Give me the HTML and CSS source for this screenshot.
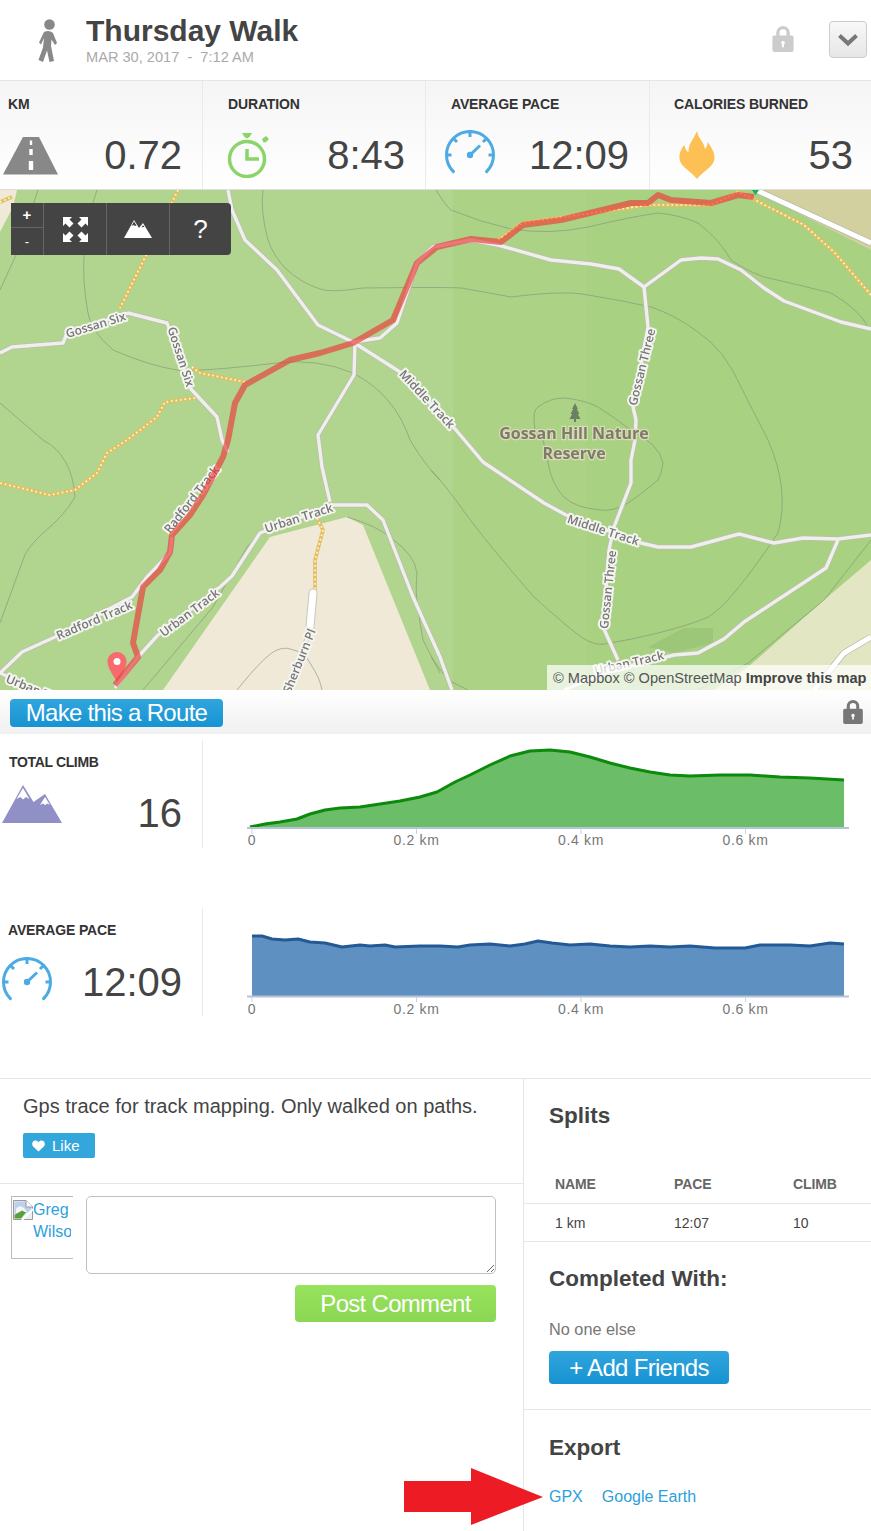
FILE: index.html
```html
<!DOCTYPE html>
<html lang="en">
<head>
<meta charset="utf-8">
<title>Thursday Walk</title>
<link rel="stylesheet" href="styles.css">
</head>
<body>
<svg class="defs" width="0" height="0" aria-hidden="true">
  <symbol id="i-gauge" viewBox="0 0 50 44">
    <path class="gauge-line" d="M8.400 41.600A23.500 23.500 0 1 1 41.600 41.600"/>
    <path class="gauge-tick" d="M25 2V7M8.500 8.500L12 12M41.500 8.500L38 12M1.500 25H6.500M43.500 25H48.500M25 25L35 15.500"/>
    <circle class="gauge-dot" cx="25" cy="25" r="3.200"/>
  </symbol>
  <symbol id="i-lock" viewBox="0 0 22 28">
    <path d="M4 12V8a7 7 0 0 1 14 0v4h-3.400V8a3.600 3.600 0 0 0-7.200 0v4z"/>
    <path fill-rule="evenodd" d="M2 11h18a2 2 0 0 1 2 2v13a2 2 0 0 1-2 2H2a2 2 0 0 1-2-2V13a2 2 0 0 1 2-2zM11 16.500a2 2 0 0 0-1 3.700V23h2v-2.800a2 2 0 0 0-1-3.700z"/>
  </symbol>
</svg>
<div class="page">
  <header class="head">
    <svg class="walker" viewBox="36 18 24 46"><circle cx="49.500" cy="24.500" r="5.300"/><path d="M44 32Q49 29.500 53 33L57 43 55 45 51.500 39.500 51 46 54 61 49.500 62 47 50.500 43 62 38.500 60 43 47.500 44 38 41 44.500 39 42.500Z"/></svg>
    <div class="head-text">
      <h1 class="title">Thursday Walk</h1>
      <div class="date">MAR 30, 2017 &nbsp;-&nbsp; 7:12 AM</div>
    </div>
    <svg class="lock lock-top"><use href="#i-lock"/></svg>
    <button class="chev-btn" type="button" aria-label="More"><svg viewBox="0 0 22 14" class="chev"><path d="M2.500 2.500L11 10.500 19.500 2.500"/></svg></button>
  </header>

  <section class="stats">
    <div class="stat stat-km">
      <div class="stat-label">KM</div>
      <div class="stat-body">
        <svg class="ico-road" viewBox="0 0 55 38"><path class="road-shape" d="M20 0H36L55 37.500H0Z"/><path class="road-dash" d="M26.800 3.500H29.200V8H26.800ZM26.300 12H29.700V18H26.300ZM25.800 24H30.200V33H25.800Z"/></svg>
        <span class="stat-value">0.72</span>
      </div>
    </div>
    <div class="stat stat-dur">
      <div class="stat-label">DURATION</div>
      <div class="stat-body">
        <svg class="ico-watch" viewBox="0 0 42 46"><circle class="watch-ring" cx="19" cy="27" r="17.500"/><path class="watch-hand" d="M19 17V27H31"/><path class="watch-knob" d="M14 1H24L21.500 5 19 6.500 16.500 5ZM34 7L38 4 41 7 37.500 10.500 35.500 10.500Z"/></svg>
        <span class="stat-value">8:43</span>
      </div>
    </div>
    <div class="stat stat-pace">
      <div class="stat-label">AVERAGE PACE</div>
      <div class="stat-body">
        <svg class="ico-gauge ico-gauge-top"><use href="#i-gauge"/></svg>
        <span class="stat-value">12:09</span>
      </div>
    </div>
    <div class="stat stat-cal">
      <div class="stat-label">CALORIES BURNED</div>
      <div class="stat-body">
        <svg class="ico-flame" viewBox="0 0 36 48"><path d="M18 0C19.500 8 25 11 26 18 28 16 28.500 13 28.500 11 33 17 36 22 35.500 28 34.500 36 24 40 18 48 12 40 1.500 36 .5 28 0 22 2.500 17 5.500 14 6 18 7.500 20 9.500 21.500 9 13 15 8 18 0Z"/></svg>
        <span class="stat-value">53</span>
      </div>
    </div>
  </section>

  <section class="map">
    <svg class="map-svg" viewBox="0 0 871 500" width="871" height="500">
      <defs>
        <g id="roads">
          <path d="M228 0L232 20 245 50 277 80 318 135 353 152 400 182 456 240 483 272 544 313 566 325 641 353 658 357 691 357 739 344 774 353 803 348 838 349 871 345"/>
          <path d="M0 163L12 157 63 153 67 143 128 123 167 133 180 167 190 198 217 227 222 250 228 262"/>
          <path d="M172 347L170 363 147 387 132 407 55 447 22 462 0 483"/>
          <path d="M353 152L380 148 397 133 417 73 433 57 471 50 498 55 551 70 591 74 619 79 644 97 681 70 701 68 718 69 741 80 764 98 784 111 841 132 871 139"/>
          <path d="M644 97L648 137 633 217 636 230 635 250 631 270 631 293 614 337 609 360 603 437 618 470"/>
          <path d="M115 498L138 467 158 445 220 397 232 386 260 343 333 315 367 315 383 330 413 407 440 467 452 500"/>
          <path d="M564 500L613 480 674 465 698 463 724 449 744 432 826 378 838 350"/>
          <path d="M355 152L354 185 318 245 322 277 330 312"/>
          <path d="M0 483L28 496 48 505"/>
          <path d="M310 440L296 480 280 510"/>
        </g>
        <g id="tracks">
          <path d="M178 0L170 17 120 118"/>
          <path d="M192 177L200 183 245 192"/>
          <path d="M195 208L165 212 157 227 127 250 107 263 97 283 75 300 50 305 0 293"/>
          <path d="M317 328L323 340 315 370 315 400"/>
          <path d="M498 50L523 33 648 15 711 15 738 2 751 8 804 35 834 62 871 105"/>
          <path d="M0 12L12 7"/>
        </g>
        <path id="route" d="M115 495L138 467 133 453 143 397 160 380 170 362 172 345 190 325 203 305 223 267 228 250 235 213 245 195 290 170 320 163 353 153 393 130 417 73 437 57 471 49 501 52 523 35 561 30 631 13 648 13 658 5 671 10 711 13 738 5 754 7"/>
      </defs>
      <rect class="land-a" width="453" height="500"/>
      <rect class="land-b" x="453" width="134" height="500"/>
      <rect class="land-c" x="587" width="284" height="500"/>
      <path class="beige" d="M163 500L270 347 347 327 363 335 430 500Z"/>
      <path class="beige" d="M0 0H17L13 17 0 42Z"/>
      <path class="olive" d="M752 0H871V60Z"/>
      <path class="pale" d="M871 370L824 410 748 477 714 500H871Z"/>
      <path class="patch" d="M648 457L684 438H713V453L674 463Z"/>
      <g class="contours">
        <path d="M38 0L17 63 0 100"/>
        <path d="M97 0Q76 60 88 123 90 140 113 160 150 176 177 180 200 182 277 173 317 168 353 183 395 205 410 250 425 275 440 290"/>
        <path d="M431 280Q445 295 458 313 480 345 534 407 565 435 581 447 595 456 604 454 630 450 658 443 690 435 708 427 730 415 778 343 790 300 768 250 750 215 741 197 725 160 698 142 675 125 651 117 620 110 588 105 565 100 511 107 490 103 461 98 445 97 363 98 330 103 320 99 280 85 268 50 260 20 263 0"/>
        <path d="M43 250Q72 265 75 307 65 325 43 343 25 360 23 370L0 433"/>
        <path d="M0 213L43 250"/>
        <path d="M436 0Q445 15 451 20 480 32 511 39 550 45 588 37 630 27 658 23 680 25 698 33 720 50 731 70 745 80 764 87 800 95 831 103 860 120 868 137"/>
        <path d="M535 240Q532 220 538 217 550 208 564 208 585 210 598 217 615 228 631 240 660 255 663 273 662 283 658 290 640 305 628 313 612 322 601 320 575 318 564 307 552 295 548 273L543 250Z"/>
        <path d="M347 327Q375 335 390 347 415 365 417 383 415 405 418 417 420 435 423 450L440 483"/>
        <path d="M143 500L213 417 247 357 260 343"/>
        <path d="M237 500Q265 465 277 460 285 457 290 459 305 462 310 473 320 488 322 500"/>
        <path d="M871 350L824 410 748 473 698 500"/>
        <path d="M431 467L448 490 468 500"/>
      </g>
      <use href="#tracks" class="track-base"/>
      <use href="#tracks" class="track-dots"/>
      <use href="#roads" class="road-case"/>
      <use href="#roads" class="road-fill"/>
      <path class="road-wide-case" d="M313 403L310 437"/>
      <path class="road-wide" d="M313 403L310 437"/>
      <path class="road-big-case" d="M756 0L871 53"/>
      <path class="road-big" d="M756 0L871 53"/>
      <path class="road-big-case" d="M871 447L844 463 814 500"/>
      <path class="road-big" d="M871 447L844 463 814 500"/>
      <path class="green-dot" d="M752 0H759L755.500 5Z"/>
      <g class="lbl">
        <text transform="translate(97 139) rotate(-17)">Gossan Six</text>
        <text transform="translate(177 168) rotate(72)">Gossan Six</text>
        <text transform="translate(424 212) rotate(47)">Middle Track</text>
        <text transform="translate(602 344) rotate(18)">Middle Track</text>
        <text transform="translate(646 178) rotate(-76)">Gossan Three</text>
        <text transform="translate(612 400) rotate(-84)">Gossan Three</text>
        <text transform="translate(96 434) rotate(-23)">Radford Track</text>
        <text transform="translate(192 426) rotate(-37)">Urban Track</text>
        <text transform="translate(300 332) rotate(-18)">Urban Track</text>
        <text transform="translate(630 477) rotate(-13)">Urban Track</text>
        <text transform="translate(5 492) rotate(22)" class="lbl-start">Urban Track</text>
        <text transform="translate(316 441) rotate(-68)" class="lbl-end">Sherburn Pl</text>
      </g>
      <g class="poi">
        <text x="574" y="249">Gossan Hill Nature</text>
        <text x="574" y="269">Reserve</text>
      </g>
      <path class="tree" d="M575 213L578 219H576.800L579.500 224H577.800L580.500 229H576V232H574V229H569.500L572.200 224H570.500L573.200 219H572Z"/>
      <path class="pin" d="M117 462C122.500 462 126.500 466.500 126.500 471.500 126.500 478 120 487 117 491.500 114 487 107.500 478 107.500 471.500 107.500 466.500 111.500 462 117 462Z"/>
      <circle class="pin-dot" cx="117" cy="471.500" r="3.500"/>
      <g class="lbl">
        <text transform="translate(195 312) rotate(-52)">Radford Track</text>
      </g>
      <use href="#route" class="route"/>
    </svg>
    <div class="controls">
      <div class="ctl-zoom"><span class="ctl-z">+</span><span class="ctl-z ctl-z2">-</span></div>
      <div class="ctl">
        <svg class="ctl-expand" viewBox="0 0 25 25"><path d="M0 0H9L6.500 2.500 10.500 6.500 6.500 10.500 2.500 6.500 0 9ZM25 0V9L22.500 6.500 18.500 10.500 14.500 6.500 18.500 2.500 16 0ZM0 25V16L2.500 18.500 6.500 14.500 10.500 18.500 6.500 22.500 9 25ZM25 25H16L18.500 22.500 14.500 18.500 18.500 14.500 22.500 18.500 25 16Z"/></svg>
      </div>
      <div class="ctl">
        <svg class="ctl-mtn" viewBox="0 0 28 18"><path class="mtn-w" d="M10 0L15 8 19 3 28 18H0Z"/><path class="mtn-d" d="M10 1.500L7.500 6 9.500 5 11 6 12.500 5.500ZM19 5L17.500 7.500 19 7 20.500 7.500Z"/></svg>
      </div>
      <div class="ctl ctl-q">?</div>
    </div>
    <div class="attrib">© Mapbox © OpenStreetMap <b>Improve this map</b></div>
  </section>

  <div class="route-bar">
    <button class="btn btn-blue btn-route" type="button">Make this a Route</button>
    <svg class="lock lock-route"><use href="#i-lock"/></svg>
  </div>

  <section class="metric metric-climb">
    <div class="metric-side">
      <div class="metric-label">TOTAL CLIMB</div>
      <div class="metric-body">
        <svg class="ico-mtn" viewBox="0 0 60 38"><path class="m-fill" d="M21 0L31.500 17 43 9 60 38H0Z"/><path class="m-snow" d="M21 3L14.500 14 18.500 12 21 14.500 24 12 27.500 14ZM43 12L38 20 41 18.500 43 20 45.500 18.500 48 20Z"/></svg>
        <span class="metric-value metric-value-climb">16</span>
      </div>
    </div>
    <svg class="chart" viewBox="203 740 668 108" width="668" height="108">
      <path class="area-green" d="M250 827L265 824 280 822 297 819 310 814 325 810 340 808 360 807 380 804 400 801 420 797 437 792 455 782 470 775 490 765 510 756 530 751 550 750 570 752 590 757 610 763 630 768 650 772 670 775 690 776 720 775 750 775 780 777 810 778 844 780V828H250Z"/>
      <path class="line-green" d="M250 827L265 824 280 822 297 819 310 814 325 810 340 808 360 807 380 804 400 801 420 797 437 792 455 782 470 775 490 765 510 756 530 751 550 750 570 752 590 757 610 763 630 768 650 772 670 775 690 776 720 775 750 775 780 777 810 778 844 780"/>
      <path class="axis" d="M247 828H849"/>
      <path class="tick" d="M252 829V834M416.500 829V834M581 829V834M745.500 829V834"/>
      <g class="axis-text">
        <text x="252" y="845">0</text><text x="416.500" y="845">0.2 km</text><text x="581" y="845">0.4 km</text><text x="745.500" y="845">0.6 km</text>
      </g>
    </svg>
  </section>

  <section class="metric metric-pace">
    <div class="metric-side">
      <div class="metric-label metric-label-pace">AVERAGE PACE</div>
      <div class="metric-body">
        <svg class="ico-gauge ico-gauge-side"><use href="#i-gauge"/></svg>
        <span class="metric-value metric-value-pace">12:09</span>
      </div>
    </div>
    <svg class="chart" viewBox="203 908 668 108" width="668" height="108">
      <path class="area-blue" d="M252 936L262 936 272 939 285 940 298 939 310 942 325 943 342 947 360 945 370 946 385 945 395 947 420 946 440 946 458 947 470 945 490 944 510 946 525 944 538 941 552 943 570 945 590 944 610 946 630 947 650 946 670 947 690 946 715 948 745 948 760 945 790 945 810 946 830 943 844 944V996H252Z"/>
      <path class="line-blue" d="M252 936L262 936 272 939 285 940 298 939 310 942 325 943 342 947 360 945 370 946 385 945 395 947 420 946 440 946 458 947 470 945 490 944 510 946 525 944 538 941 552 943 570 945 590 944 610 946 630 947 650 946 670 947 690 946 715 948 745 948 760 945 790 945 810 946 830 943 844 944"/>
      <path class="axis" d="M247 996.500H849"/>
      <path class="tick" d="M252 997V1002M416.500 997V1002M581 997V1002M745.500 997V1002"/>
      <g class="axis-text">
        <text x="252" y="1014">0</text><text x="416.500" y="1014">0.2 km</text><text x="581" y="1014">0.4 km</text><text x="745.500" y="1014">0.6 km</text>
      </g>
    </svg>
  </section>

  <section class="lower">
    <div class="lower-left">
      <div class="desc">
        <p class="desc-text">Gps trace for track mapping. Only walked on paths.</p>
        <button class="like" type="button"><svg class="heart" viewBox="0 0 14 12"><path d="M7 12L1.200 6.500C-1 4 .5 0 3.700 0 5 0 6.300.7 7 2 7.700.7 9 0 10.300 0 13.500 0 15 4 12.800 6.500Z"/></svg>Like</button>
      </div>
      <div class="comment">
        <div class="avatar">
          <svg class="broken" viewBox="0 0 20 20"><path class="b-page" d="M.5.500H13L19.500 7V19.500H.5Z"/><path class="b-sky" d="M1.500 1.500H12.500L18.500 7.500V12L1.500 15Z"/><path class="b-cloud" d="M3 9Q6 4 11 8L14 12 3 13Z"/><path class="b-hill" d="M1.500 18.500V15L9 10.500 13 12.500 8 18.500Z"/><path class="b-slash" d="M9 20L20 9"/><path class="b-fold" d="M13 .5V7H19.500"/></svg>
          <a class="avatar-alt" href="#">Greg Wilson</a>
        </div>
        <div class="comment-form">
          <textarea class="comment-box" aria-label="Comment"></textarea>
          <button class="btn btn-green" type="button">Post Comment</button>
        </div>
      </div>
    </div>
    <aside class="lower-right">
      <div class="splits">
        <h2 class="side-h">Splits</h2>
        <div class="split-row split-head"><span>NAME</span><span>PACE</span><span>CLIMB</span></div>
        <div class="split-row split-data"><span>1 km</span><span>12:07</span><span>10</span></div>
      </div>
      <div class="side-sec friends">
        <h2 class="side-h">Completed With:</h2>
        <p class="none">No one else</p>
        <button class="btn btn-blue btn-friends" type="button">+ Add Friends</button>
      </div>
      <div class="side-sec export">
        <h2 class="side-h">Export</h2>
        <div class="export-links"><a href="#">GPX</a><a href="#">Google Earth</a></div>
      </div>
    </aside>
  </section>

  <svg class="arrow" viewBox="0 0 139 57" width="139" height="57"><path d="M0 13H67V0L139 29 67 57V44H0Z"/></svg>
</div>
</body>
</html>
```
FILE: styles.css
```css
* { box-sizing: border-box; }
html, body { margin: 0; padding: 0; background: #fff; }
body { font-family: "Liberation Sans", Arial, sans-serif; color: #444; }
.defs { position: absolute; }
.page { position: relative; width: 871px; height: 1531px; overflow: hidden; }

/* header */
.head { display: flex; align-items: flex-start; height: 81px; border-bottom: 1px solid #e6e6e6; }
.walker { width: 24px; height: 46px; margin: 18px 0 0 36px; fill: #888; flex: none; }
.head-text { margin-left: 26px; padding-top: 14px; flex: 1; }
.title { margin: 0; font-size: 30px; line-height: 34px; font-weight: 700; color: #444; }
.date { font-size: 14.600px; line-height: 18px; color: #aaa; }
.lock { display: block; flex: none; }
.lock-top { width: 22px; height: 27px; margin: 25px 35px 0 0; fill: #ccc; }
.chev-btn { width: 38px; height: 37px; margin: 21px 4px 0 0; padding: 0; border: 1px solid #ccc; border-radius: 4px; background: linear-gradient(#f8f8f8, #e6e6e6); display: flex; align-items: center; justify-content: center; }
.chev { width: 22px; height: 14px; fill: none; stroke: #777; stroke-width: 4; }

/* stats */
.stats { display: grid; grid-template-columns: 203px 223px 224px 221px; height: 109px; background: linear-gradient(#f5f5f5, #fff); border-bottom: 1px solid #ddd; }
.stat { border-right: 1px solid #eaeaea; padding-top: 14px; }
.stat:last-child { border-right: 0; }
.stat-label { font-size: 14px; line-height: 18px; font-weight: 700; color: #333; letter-spacing: -.15px; }
.stat-body { display: flex; align-items: center; justify-content: space-between; height: 58px; margin-top: 13px; }
.stat-value { font-size: 40px; line-height: 50px; color: #444; }
.stat-km .stat-label { padding-left: 8px; }
.stat-km .stat-body { padding: 0 20px 0 3px; }
.stat-dur .stat-label { padding-left: 25px; }
.stat-dur .stat-body { padding: 0 20px 0 25px; }
.stat-pace .stat-label { padding-left: 25px; }
.stat-pace .stat-body { padding: 0 20px 0 19px; }
.stat-cal .stat-label { padding-left: 24px; }
.stat-cal .stat-body { padding: 0 18px 0 29px; }
.ico-road { width: 55px; height: 38px; margin-top: 2px; }
.road-shape { fill: #888; }
.road-dash { fill: #fff; }
.ico-watch { width: 42px; height: 46px; }
.watch-ring, .watch-hand { fill: none; stroke: #8bd46a; stroke-width: 3.500; }
.watch-knob { fill: #8bd46a; }
.ico-gauge { width: 50px; height: 44px; flex: none; }
.ico-gauge-top { margin-top: -6px; }
.ico-gauge-side { margin-top: 18px; }
.gauge-line, .gauge-tick { fill: none; stroke: #4cabe2; stroke-width: 3; }
.gauge-line { stroke-linecap: round; }
.gauge-dot { fill: #4cabe2; }
.ico-flame { width: 36px; height: 48px; fill: #fcc055; }

/* map */
.map { position: relative; height: 500px; overflow: hidden; }
.map-svg { display: block; filter: blur(.4px); }
.land-a { fill: #b1d58e; }
.land-b { fill: #acd286; }
.land-c { fill: #a9d182; }
.beige { fill: #f0e9d7; }
.olive { fill: #d3d0a0; }
.pale { fill: #e3e6c3; }
.patch { fill: #9cc678; }
.contours path { fill: none; stroke: #7f9074; stroke-width: .8; opacity: .75; }
.track-base { fill: none; stroke: #e4bf5e; stroke-width: 3.600; stroke-linejoin: round; }
.track-dots { fill: none; stroke: #fdf8e4; stroke-width: 1.700; stroke-dasharray: 1.700 2.800; }
.road-case { fill: none; stroke: #bdbdb0; stroke-width: 5; stroke-linejoin: round; }
.road-fill { fill: none; stroke: #efefec; stroke-width: 3.400; stroke-linejoin: round; }
.road-wide-case { fill: none; stroke: #c8c8b8; stroke-width: 9; stroke-linecap: round; }
.road-wide { fill: none; stroke: #fff; stroke-width: 7; stroke-linecap: round; }
.road-big-case { fill: none; stroke: #b8b8a4; stroke-width: 6.500; }
.road-big { fill: none; stroke: #fff; stroke-width: 5; }
.route { fill: none; stroke: #ea3f3c; stroke-opacity: .68; stroke-width: 6; stroke-linejoin: round; }
.green-dot { fill: #19b05a; }
.lbl text { font-family: "Open Sans", sans-serif; font-size: 12px; font-weight: 600; fill: #777; stroke: #f4f4f0; stroke-width: 4; paint-order: stroke; stroke-linejoin: round; text-anchor: middle; }
.lbl .lbl-start { text-anchor: start; }
.lbl .lbl-end { text-anchor: end; }
.poi text { font-family: "Open Sans", sans-serif; font-size: 16px; font-weight: 700; fill: #7e7b68; stroke: #d8dcb8; stroke-width: 2.500; paint-order: stroke; text-anchor: middle; }
.tree { fill: #6b8063; }
.pin { fill: #f96a6e; }
.pin-dot { fill: #fff; }

.controls { position: absolute; left: 11px; top: 13px; width: 220px; height: 52px; display: flex; background: #444; border-radius: 0 4px 4px 0; color: #fff; }
.ctl-zoom { width: 33px; display: flex; flex-direction: column; border-right: 1px solid #666; }
.ctl-z { flex: 1; text-align: center; font-size: 15px; line-height: 23px; font-weight: 700; }
.ctl-z2 { border-top: 1px solid #666; font-size: 13px; line-height: 27px; font-weight: 400; }
.ctl { width: 63px; display: flex; align-items: center; justify-content: center; border-right: 1px solid #666; }
.ctl-q { width: 61px; border-right: 0; font-size: 26px; line-height: 1; }
.ctl-expand { width: 25px; height: 25px; fill: #fff; }
.ctl-mtn { width: 28px; height: 18px; }
.mtn-w { fill: #fff; }
.mtn-d { fill: #444; }
.attrib { position: absolute; right: 0; bottom: 0; width: 324px; height: 25px; padding: 4px 0 0 6px; background: rgba(255,255,255,.72); font-size: 14.600px; line-height: 18px; color: #555; white-space: nowrap; }
.attrib b { color: #444; }

/* buttons */
.btn { display: block; padding: 0; border: 0; border-radius: 4px; color: #fff; font-family: inherit; font-size: 24px; letter-spacing: -.7px; }
.btn-blue { background: linear-gradient(#30a5dd, #1793d2); }
.btn-green { width: 201px; height: 37px; margin: 11px 0 0 auto; background: linear-gradient(#98e35c, #8bd654); }

/* route bar */
.route-bar { display: flex; justify-content: space-between; height: 44px; padding: 9px 8px 0 10px; background: linear-gradient(#fff, #f0f0f0); }
.btn-route { width: 213px; height: 28px; padding-bottom: 2px; }
.lock-route { width: 20px; height: 25px; fill: #777; }

/* metrics */
.metric { display: flex; height: 108px; }
.metric-climb { margin-top: 6px; }
.metric-pace { margin-top: 60px; }
.metric-side { width: 203px; flex: none; border-right: 1px solid #eaeaea; padding-top: 13px; }
.metric-label { padding-left: 9px; font-size: 14px; line-height: 18px; font-weight: 700; color: #333; letter-spacing: -.35px; }
.metric-label-pace { padding-left: 8px; letter-spacing: -.15px; }
.metric-body { display: flex; align-items: flex-start; justify-content: space-between; padding: 0 20px 0 2px; }
.metric-value { font-size: 40px; line-height: 50px; color: #444; }
.metric-value-climb { margin-top: 17px; }
.metric-value-pace { margin-top: 18px; }
.ico-mtn { width: 60px; height: 38px; margin-top: 14px; }
.m-fill { fill: #9090c6; }
.m-snow { fill: #fff; }
.chart { display: block; flex: none; }
.area-green { fill: #6cbd67; }
.line-green { fill: none; stroke: #0c8a0c; stroke-width: 3; stroke-linejoin: round; }
.area-blue { fill: #5e91c2; }
.line-blue { fill: none; stroke: #235a96; stroke-width: 3; stroke-linejoin: round; }
.axis { fill: none; stroke: #b5c3d6; stroke-width: 2; }
.tick { fill: none; stroke: #c6d3e3; stroke-width: 1; }
.axis-text text { font-size: 14px; fill: #777; text-anchor: middle; letter-spacing: .7px; }

/* lower */
.lower { display: flex; margin-top: 62px; border-top: 1px solid #e6e6e6; height: 453px; }
.lower-left { width: 524px; flex: none; border-right: 1px solid #e6e6e6; }
.desc { height: 105px; padding: 15px 0 0 23px; border-bottom: 1px solid #e6e6e6; }
.desc-text { margin: 0; font-size: 20px; line-height: 24px; color: #444; }
.like { display: flex; align-items: center; width: 72px; height: 25px; margin-top: 15px; padding: 0 0 0 9px; border: 0; border-radius: 2px; background: #33a6dc; color: #fff; font-family: inherit; font-size: 15px; }
.heart { width: 13px; height: 12px; margin-right: 7px; fill: #fff; }
.comment { display: flex; padding: 12px 27px 0 11px; }
.avatar { display: flex; width: 62px; height: 63px; flex: none; overflow: hidden; padding: 1px 0 0 1px; border: 1px solid #bbb; border-right: 0; }
.broken { width: 20px; height: 20px; margin-top: 2px; flex: none; }
.b-page { fill: #eee; stroke: #999; }
.b-sky { fill: #bcd0ee; }
.b-cloud { fill: #f4f6fa; }
.b-hill { fill: #5aa03c; }
.b-slash { stroke: #fff; stroke-width: 2; }
.b-fold { fill: #fff; stroke: #999; }
.avatar-alt { display: block; width: 38px; flex: none; overflow: hidden; margin-top: 1px; font-size: 16px; line-height: 22px; color: #2d9fdb; text-decoration: none; }
.comment-form { flex: 1; margin-left: 13px; }
.comment-box { display: block; width: 100%; height: 78px; border: 1px solid #c0c0c0; border-radius: 5px; background: #fff; }
.lower-right { flex: 1; }
.side-h { margin: 0; font-size: 22.500px; line-height: 26px; font-weight: 700; color: #444; }
.splits { height: 163px; padding-top: 24px; border-bottom: 1px solid #e6e6e6; }
.splits .side-h { padding-left: 25px; }
.split-row { display: grid; grid-template-columns: 119px 119px 1fr; padding-left: 31px; }
.split-head { height: 29px; margin-top: 46px; font-size: 14px; line-height: 18px; font-weight: 700; color: #666; letter-spacing: -.1px; border-bottom: 1px solid #e6e6e6; }
.split-data { padding-top: 10px; font-size: 14px; line-height: 18px; color: #444; }
.side-sec { padding: 24px 0 0 25px; }
.friends { height: 168px; border-bottom: 1px solid #e6e6e6; }
.none { margin: 27px 0 0; font-size: 16.300px; line-height: 20px; color: #777; }
.btn-friends { width: 180px; height: 33px; margin-top: 12px; }
.export { padding-top: 25px; }
.export-links { display: flex; gap: 19px; margin-top: 26px; font-size: 16px; line-height: 20px; }
.export-links a { color: #2d9fdb; text-decoration: none; }

.arrow { position: absolute; left: 404px; top: 1468px; fill: #ed1c24; }
```
